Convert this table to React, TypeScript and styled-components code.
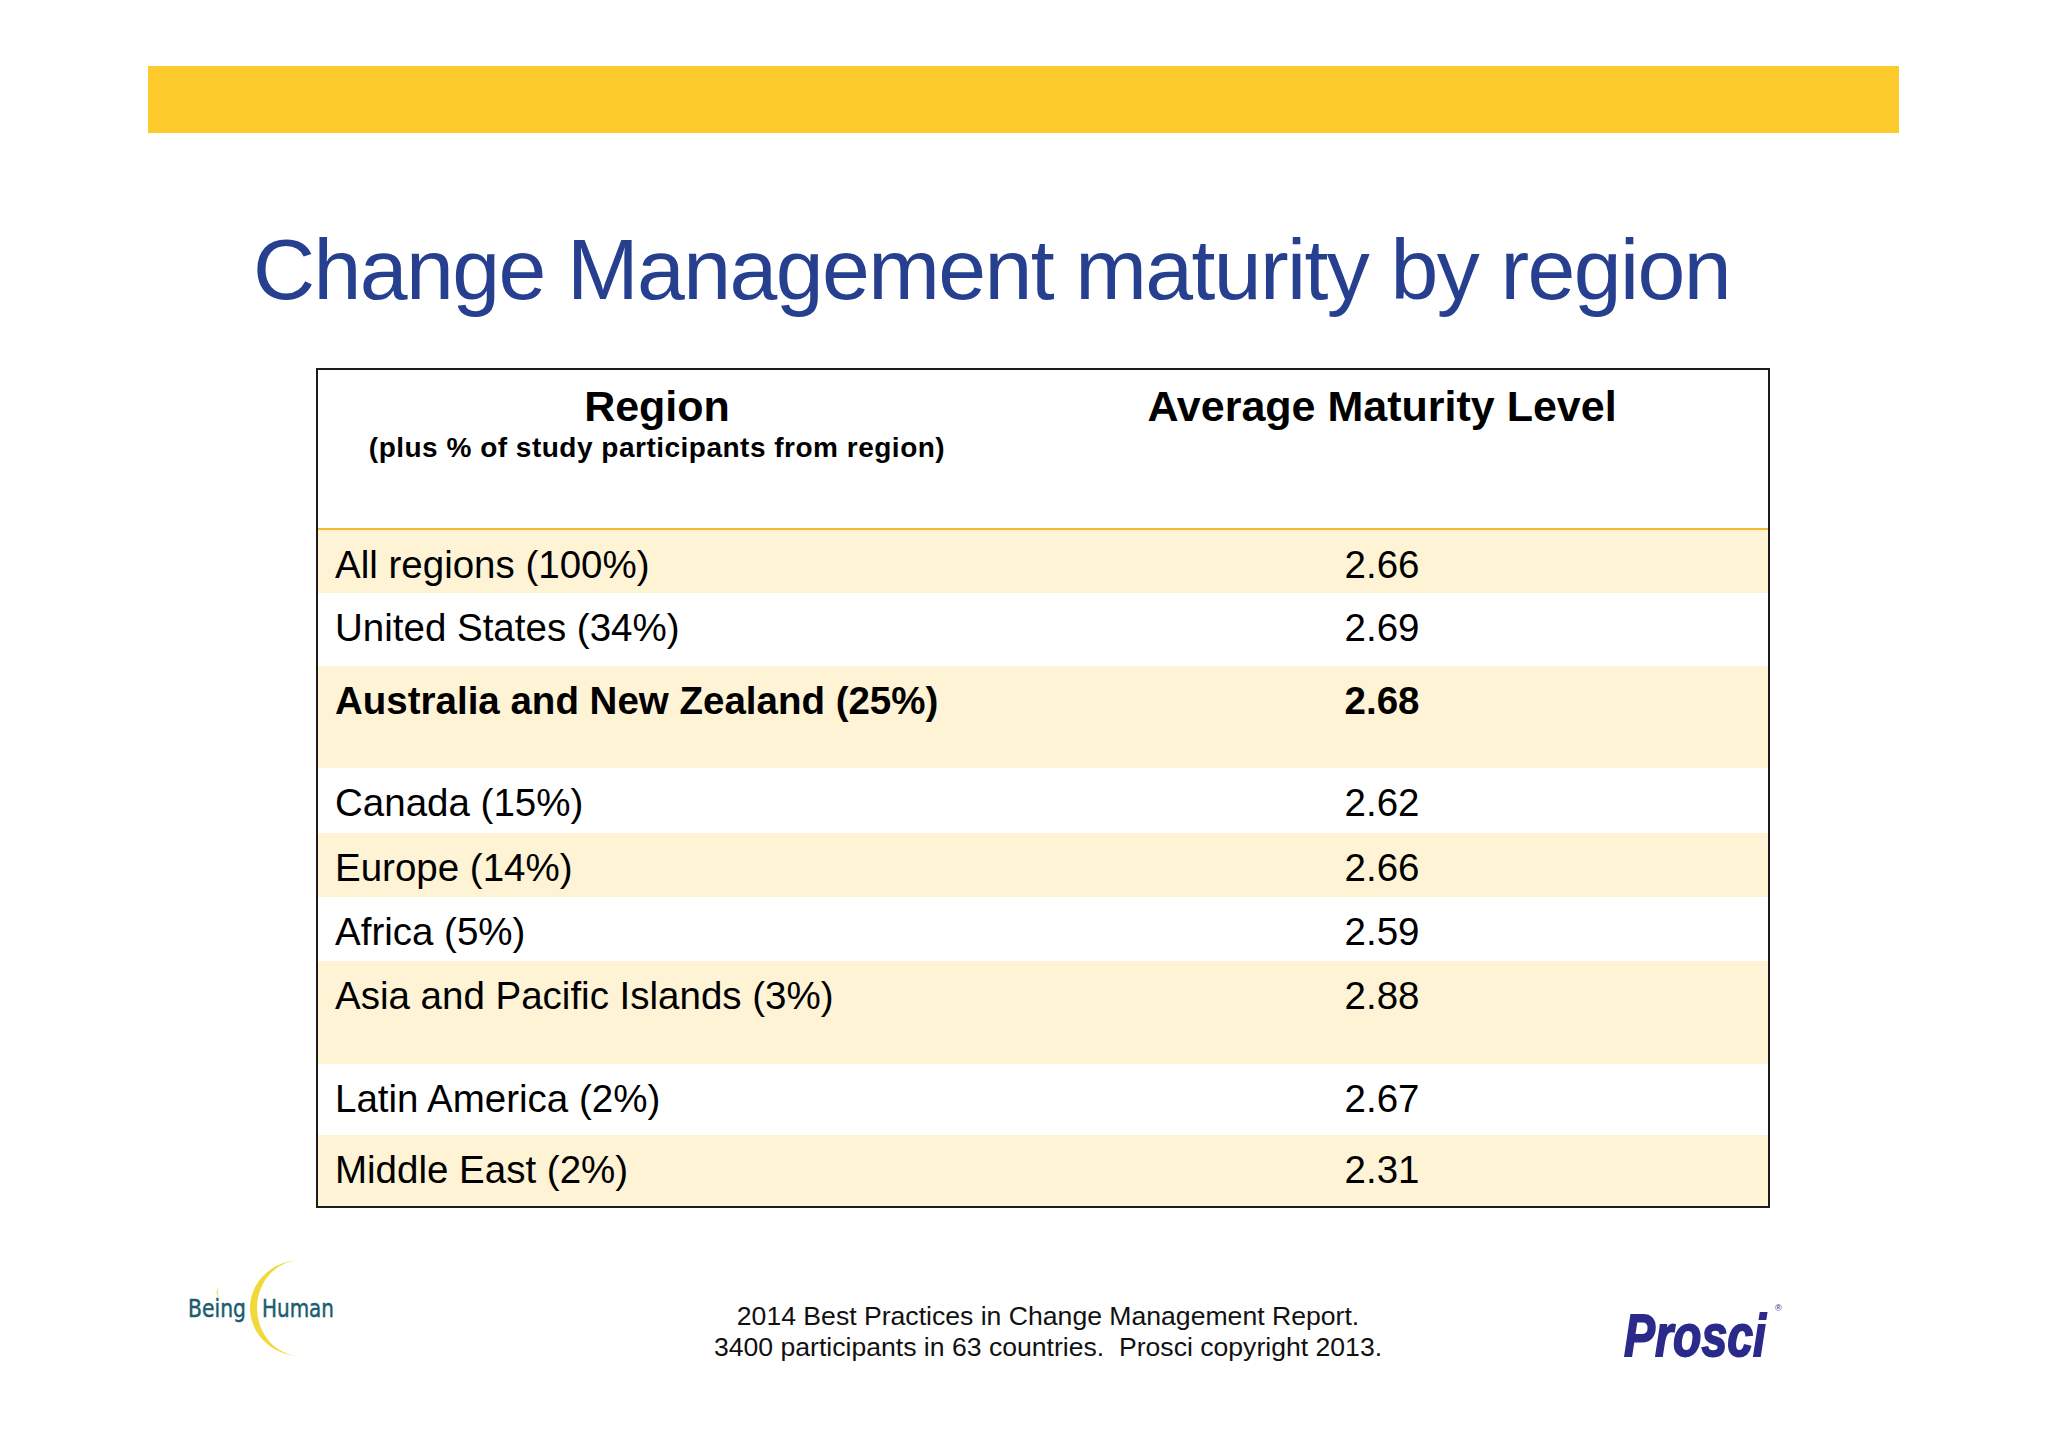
import styled, { createGlobalStyle } from 'styled-components';

const GlobalStyles = createGlobalStyle`
  html, body {
    margin: 0;
    padding: 0;
    background: #ffffff;
  }
  body {
    font-family: "Liberation Sans", Arial, sans-serif;
    color: #111111;
  }
`;

const Slide = styled.div`
  width: 2048px;
  min-height: 1447px;
  display: flex;
  flex-direction: column;
  background: #ffffff;
`;

const TopBar = styled.div`
  margin: 66px 0 0 148px;
  width: 1751px;
  height: 67px;
  background: #fcca2b;
`;

const Title = styled.h1`
  margin: 93px 0 0 253px;
  font-family: "Liberation Sans", Arial, sans-serif;
  font-weight: 400;
  font-size: 86px;
  line-height: 86px;
  letter-spacing: -1.6px;
  color: #26408f;
`;

const Table = styled.div`
  margin: 56px 0 0 316px;
  width: 1454px;
  box-sizing: border-box;
  border: 2px solid #1c1c1c;
  background: #ffffff;
`;

const HeaderRow = styled.div`
  display: grid;
  grid-template-columns: 678px 1fr;
  height: 160px;
  box-sizing: border-box;
  border-bottom: 2px solid #f6b92f;
`;

const HeaderCell = styled.div`
  padding-top: 12px;
  text-align: center;
  color: #000000;
`;

const HeaderLabel = styled.div`
  font-weight: 700;
  font-size: 43px;
  line-height: 49px;
`;

const HeaderNote = styled.div`
  font-weight: 700;
  font-size: 28px;
  line-height: 33px;
  letter-spacing: 0.5px;
`;

const Row = styled.div<{ $height: number; $shaded: boolean; $bold?: boolean }>`
  display: grid;
  grid-template-columns: 678px 1fr;
  height: ${({ $height }) => $height}px;
  box-sizing: border-box;
  background: ${({ $shaded }) => ($shaded ? '#fef3d5' : '#ffffff')};
  font-size: 38.5px;
  line-height: 44px;
  font-weight: ${({ $bold }) => ($bold ? 700 : 400)};
  color: #000000;
`;

const RegionCell = styled.div`
  padding: 13px 0 0 17px;
  white-space: nowrap;
`;

const LevelCell = styled.div`
  padding-top: 13px;
  text-align: center;
`;

const Footer = styled.div`
  display: flex;
  align-items: flex-start;
`;

const BeingHumanLogo = styled.svg`
  display: block;
  flex-shrink: 0;
  margin: 47px 0 0 180px;
  overflow: visible;
`;

const FooterNote = styled.div`
  flex-shrink: 0;
  width: 696px;
  margin: 93px 0 0 340px;
  text-align: center;
  font-size: 26.6px;
  line-height: 31px;
  color: #111111;
`;

const NoteLine = styled.div`
  white-space: pre;
`;

const ProsciLogo = styled.svg`
  display: block;
  flex-shrink: 0;
  margin: 90px 0 0 224px;
  overflow: visible;
`;

const rows = [
  { region: 'All regions (100%)', level: '2.66', height: 63 },
  { region: 'United States (34%)', level: '2.69', height: 73 },
  { region: 'Australia and New Zealand (25%)', level: '2.68', height: 102, bold: true },
  { region: 'Canada (15%)', level: '2.62', height: 65 },
  { region: 'Europe (14%)', level: '2.66', height: 64 },
  { region: 'Africa (5%)', level: '2.59', height: 64 },
  { region: 'Asia and Pacific Islands (3%)', level: '2.88', height: 103 },
  { region: 'Latin America (2%)', level: '2.67', height: 71 },
  { region: 'Middle East (2%)', level: '2.31', height: 71 },
];

function App() {
  return (
    <>
      <GlobalStyles />
      <Slide>
        <TopBar />
        <Title>Change Management maturity by region</Title>

        <Table>
          <HeaderRow>
            <HeaderCell>
              <HeaderLabel>Region</HeaderLabel>
              <HeaderNote>(plus % of study participants from region)</HeaderNote>
            </HeaderCell>
            <HeaderCell>
              <HeaderLabel>Average Maturity Level</HeaderLabel>
            </HeaderCell>
          </HeaderRow>

          {rows.map((row, i) => (
            <Row key={row.region} $height={row.height} $shaded={i % 2 === 0} $bold={row.bold}>
              <RegionCell>{row.region}</RegionCell>
              <LevelCell>{row.level}</LevelCell>
            </Row>
          ))}
        </Table>

        <Footer>
          <BeingHumanLogo width="180" height="105" viewBox="0 0 180 105">
            {/* big crescent */}
            <path d="M122 5 A51 48 0 0 0 120 101 A44 48 0 0 1 122 5 Z" fill="#f1d93a" />
            {/* little crescent over the i */}
            <path d="M40 33 A3.4 4.8 0 0 0 40 42.6 A2.2 4.8 0 0 1 40 33 Z" fill="#f1d93a" />
            <text
              x="8"
              y="62"
              fontFamily="'DejaVu Sans', sans-serif"
              fontSize="25"
              fill="#1b5d70"
              stroke="#1b5d70"
              strokeWidth="0.5"
              textLength="58"
              lengthAdjust="spacingAndGlyphs"
            >
              Being
            </text>
            <text
              x="82"
              y="62"
              fontFamily="'DejaVu Sans', sans-serif"
              fontSize="25"
              fill="#1b5d70"
              stroke="#1b5d70"
              strokeWidth="0.5"
              textLength="72"
              lengthAdjust="spacingAndGlyphs"
            >
              Human
            </text>
          </BeingHumanLogo>

          <FooterNote>
            <NoteLine>2014 Best Practices in Change Management Report.</NoteLine>
            <NoteLine>3400 participants in 63 countries.  Prosci copyright 2013.</NoteLine>
          </FooterNote>

          <ProsciLogo width="200" height="64" viewBox="0 0 200 64">
            <text
              x="4"
              y="58"
              fontFamily="'Liberation Sans', Arial, sans-serif"
              fontSize="60"
              fontWeight="700"
              fontStyle="italic"
              fill="#2b2a8b"
              stroke="#2b2a8b"
              strokeWidth="1.8"
              textLength="142"
              lengthAdjust="spacingAndGlyphs"
            >
              Prosci
            </text>
            <text x="155" y="13" fontFamily="'Liberation Sans', Arial, sans-serif" fontSize="9" fill="#2b2a8b">
              ®
            </text>
          </ProsciLogo>
        </Footer>
      </Slide>
    </>
  );
}

export default App;
